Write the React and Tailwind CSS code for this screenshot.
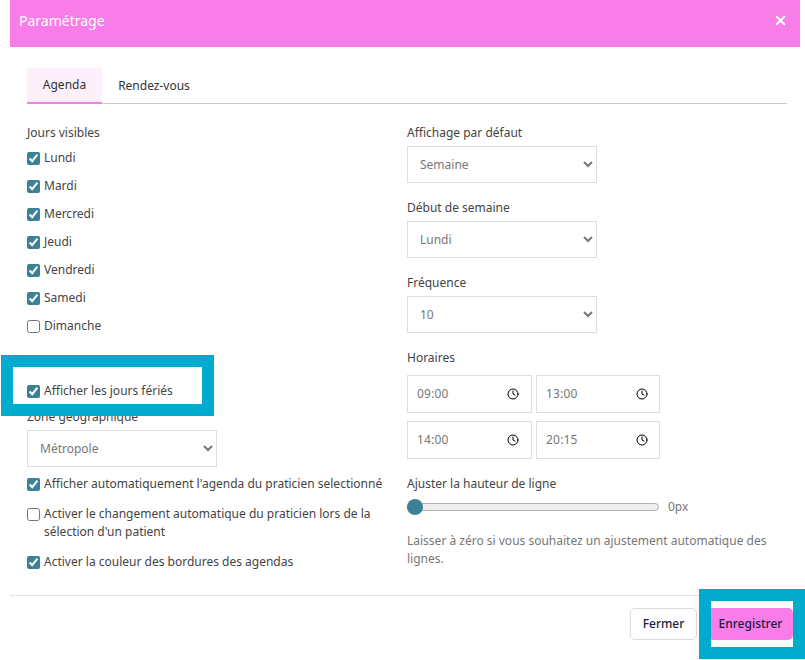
import { X, Clock } from 'lucide-react'

const days = [
  ['Lundi', true],
  ['Mardi', true],
  ['Mercredi', true],
  ['Jeudi', true],
  ['Vendredi', true],
  ['Samedi', true],
  ['Dimanche', false],
]

function Check({ label, checked = true, className = '' }) {
  return (
    <label className={`flex items-start gap-1 leading-[18px] text-[#444] ${className}`}>
      <input type="checkbox" defaultChecked={checked} className="w-[13px] h-[13px] mt-[3px] shrink-0 accent-[#3b8196]" />
      <span>{label}</span>
    </label>
  )
}

function Field({ label, value, options, className = '' }) {
  return (
    <div className={className}>
      <div className="h-[18px] leading-[18px] text-[#444]">{label}</div>
      <select
        defaultValue={value}
        className="mt-[4px] block w-[190px] h-[37px] bg-white border border-[#dedede] pl-[8px] text-[#777]"
      >
        {options.map((o) => (
          <option key={o}>{o}</option>
        ))}
      </select>
    </div>
  )
}

function Time({ value, pr }) {
  return (
    <div className={`flex items-center justify-between h-[38px] bg-white border border-[#dedede] pl-[9px] text-[#777] ${pr}`}>
      <span className="tracking-[0.2px]">{value}</span>
      <Clock size={12} strokeWidth={2} className="text-black" />
    </div>
  )
}

export default function App() {
  return (
    <div className="relative w-[805px] h-[660px] overflow-hidden bg-white text-[12px] font-['Noto_Sans',sans-serif]">
      <div className="ml-[10px] w-[790px]">
        <div className="flex items-center justify-between h-[47px] bg-[#f87de8] pl-[9px] pr-[12px] pb-[6px] text-white">
          <span className="text-[14px]">Paramétrage</span>
          <X size={15} strokeWidth={3} />
        </div>

        <div className="pl-[17px] pr-[13px] pt-[21px]">
          <div className="flex h-[36px] border-b border-[#ccc] text-[#333]">
            <div className="flex items-center justify-center w-[75px] h-[36px] bg-[#fdf0fb] border-b-2 border-[#f87de8]">Agenda</div>
            <div className="flex items-center justify-center w-[104px] h-[35px]">Rendez-vous</div>
          </div>

          <div className="grid grid-cols-2 pt-[20px]">
            <div>
              <div className="h-[18px] leading-[18px] text-[#444]">Jours visibles</div>
              <div className="flex flex-col gap-[10px] pt-[7px]">
                {days.map(([d, c]) => (
                  <Check key={d} label={d} checked={c} />
                ))}
              </div>
              <Check label="Afficher les jours fériés" className="mt-[47px]" />
              <Field label="Zone géographique" value="Métropole" options={['Métropole']} className="mt-[8px]" />
              <Check label="Afficher automatiquement l'agenda du praticien selectionné" className="mt-[8px]" />
              <Check label="Activer le changement automatique du praticien lors de la sélection d'un patient" checked={false} className="mt-[12px] w-[360px]" />
              <Check label="Activer la couleur des bordures des agendas" className="mt-[12px]" />
            </div>

            <div>
              <Field label="Affichage par défaut" value="Semaine" options={['Semaine']} />
              <Field label="Début de semaine" value="Lundi" options={['Lundi']} className="mt-[16px]" />
              <Field label="Fréquence" value="10" options={['10']} className="mt-[16px]" />
              <div className="mt-[16px] h-[18px] leading-[18px] text-[#444]">Horaires</div>
              <div className="grid grid-cols-[125px_124px] gap-x-[4px] gap-y-[8px] w-[253px] mt-[8px]">
                <Time value="09:00" pr="pr-[12px]" />
                <Time value="13:00" pr="pr-[11px]" />
                <Time value="14:00" pr="pr-[12px]" />
                <Time value="20:15" pr="pr-[11px]" />
              </div>
              <div className="mt-[16px] h-[18px] leading-[18px] text-[#444]">Ajuster la hauteur de ligne</div>
              <div className="flex items-center mt-[6px] h-[16px]">
                <div className="relative w-[252px] h-[8px] rounded-full bg-[#efefef] border border-[#b2b2b2]">
                  <div className="absolute left-[-1px] top-[-5px] w-[16px] h-[16px] rounded-full bg-[#3b8196]" />
                </div>
                <span className="ml-[9px] text-[#777]">0px</span>
              </div>
              <p className="mt-[17px] leading-[18px] text-[#777]">
                Laisser à zéro si vous souhaitez un ajustement automatique des lignes.
              </p>
            </div>
          </div>
        </div>

        <div className="absolute left-[10px] top-[595px] w-[790px] flex justify-end gap-[11px] border-t border-[#e3e3e3] pt-[12px] pr-[7px]">
          <button className="w-[67px] h-[32px] rounded-[5px] bg-white border border-[#dcdcdc] text-[#1a1a3a] font-medium">Fermer</button>
          <button className="w-[85px] h-[32px] rounded-[5px] bg-[#f87de8] text-[#1a1a3a] font-medium">Enregistrer</button>
        </div>
      </div>

      <div className="absolute left-[1px] top-[355px] w-[213px] h-[61px] border-[12px] border-[#00abcd]" />
      <div className="absolute left-[699px] top-[589px] w-[106px] h-[70px] border-[12px] border-[#00abcd]" />
    </div>
  )
}
